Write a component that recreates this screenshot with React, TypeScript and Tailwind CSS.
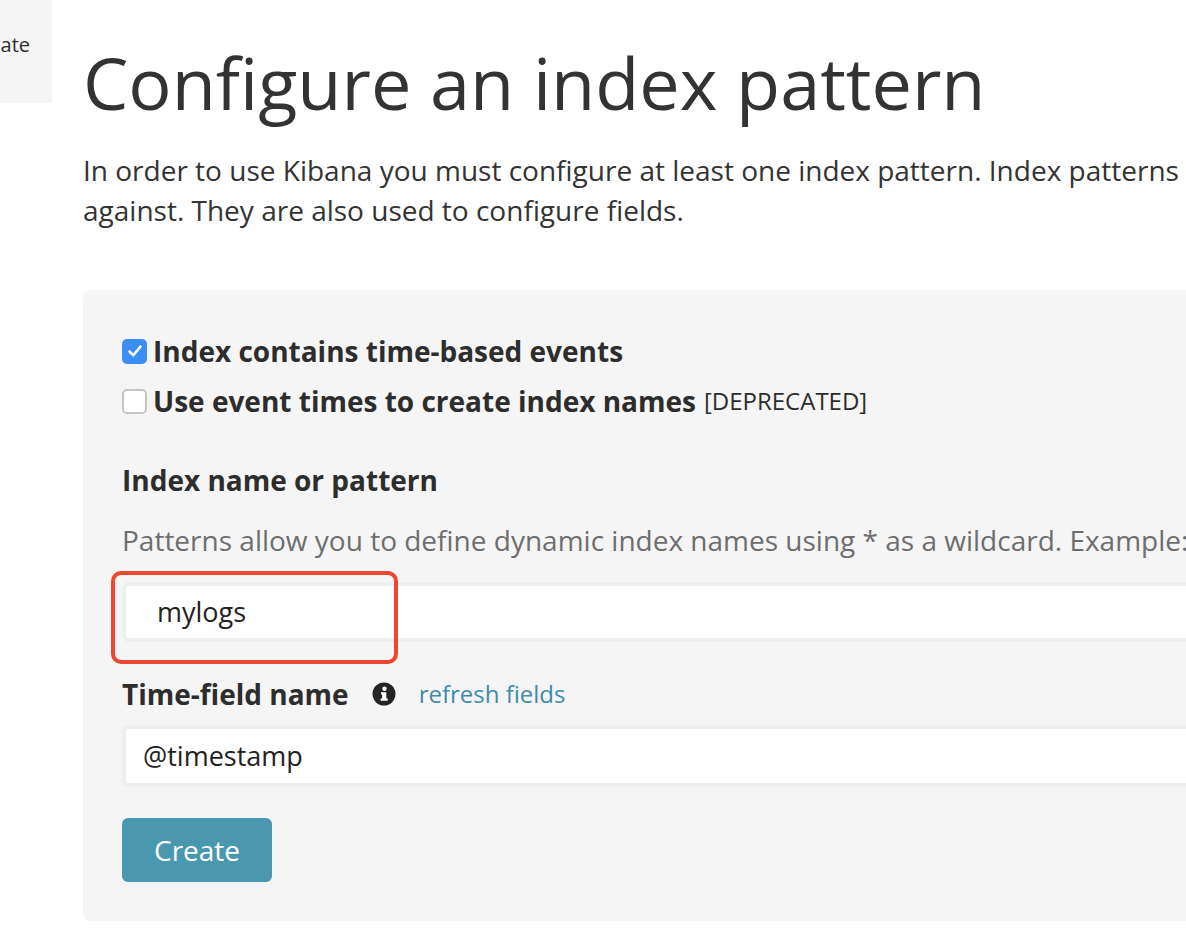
import React from "react";

function InfoIcon() {
    return (
        <svg width="24" height="24" viewBox="0 0 24 24" className="block">
            <circle cx="12" cy="12" r="11.5" fill="#252525" />
            <circle cx="12.5" cy="6.8" r="2.2" fill="#ffffff" />
            <path
                d="M9 10.2h5.3v6.4h1.4v2.2H8.6v-2.2h1.5v-4.2H9z"
                fill="#ffffff"
            />
        </svg>
    );
}

function CheckedBox() {
    return (
        <span className="flex h-[25px] w-[25px] items-center justify-center rounded-[5px] bg-[#3a8ef5]">
            <svg width="16" height="14" viewBox="0 0 16 14">
                <path
                    d="M2.5 7.5l3.8 3.8L13.5 2.5"
                    fill="none"
                    stroke="#ffffff"
                    strokeWidth="2.6"
                    strokeLinecap="round"
                    strokeLinejoin="round"
                />
            </svg>
        </span>
    );
}

function EmptyBox() {
    return (
        <span className="block h-[25px] w-[25px] rounded-[5px] border-2 border-[#c4c4c4] bg-white" />
    );
}

export default function App() {
    return (
        <div
            className="relative flex h-[930px] w-[1186px] overflow-hidden bg-white text-[#2d2d2d]"
            style={{ fontFamily: '"Open Sans", "Liberation Sans", sans-serif' }}
        >
            {/* left nav, mostly scrolled off */}
            <div className="w-[52px] shrink-0">
                <div className="flex h-[103px] items-center justify-end overflow-hidden bg-[#f5f5f5] pr-[22px] pb-[14px]">
                    <span className="whitespace-nowrap text-[20px]">Create</span>
                </div>
            </div>

            <div className="ml-[31px] w-[1700px] shrink-0">
                <h1 className="mt-[46px] whitespace-nowrap text-[72px] font-normal leading-[72px] text-[#333333]">
                    Configure an index pattern
                </h1>

                <p className="mt-[32px] text-[28px] leading-[40px] text-[#333333]">
                    <span className="whitespace-nowrap">
                        In order to use Kibana you must configure at least one
                        index pattern. Index patterns are used to identify the
                        Elasticsearch index to run search and analytics
                    </span>
                    <br />
                    against. They are also used to configure fields.
                </p>

                <div className="mt-[60px] rounded-[8px] bg-[#f5f5f5] pt-[36px] pr-[40px] pb-[39px] pl-[39px]">
                    <div className="flex h-[50px] items-center gap-[6px]">
                        <CheckedBox />
                        <span className="text-[28px] font-bold">
                            Index contains time-based events
                        </span>
                    </div>
                    <div className="flex h-[50px] items-center gap-[6px]">
                        <EmptyBox />
                        <span className="text-[28px] font-bold">
                            Use event times to create index names
                        </span>
                        <span className="ml-[2px] text-[24px]">[DEPRECATED]</span>
                    </div>

                    <div className="mt-[34px] flex h-[40px] items-center text-[28px] font-bold">
                        Index name or pattern
                    </div>
                    <div className="mt-[20px] flex h-[40px] items-center whitespace-nowrap text-[28px] text-[#6e6e6e]">
                        Patterns allow you to define dynamic index names using *
                        as a wildcard. Example: logstash-*
                    </div>

                    <div className="relative mt-[22px]">
                        <div className="flex h-[60px] items-center rounded-[6px] border-4 border-[#eceff1] bg-white pl-[31px] text-[27px] text-[#222222]">
                            mylogs
                        </div>
                        <div className="pointer-events-none absolute top-[-11px] left-[-11px] h-[93px] w-[287px] rounded-[10px] border-4 border-[#ed4631]" />
                    </div>

                    <div className="mt-[32px] flex h-[40px] items-center">
                        <span className="text-[28px] font-bold">
                            Time-field name
                        </span>
                        <span className="ml-[23px]">
                            <InfoIcon />
                        </span>
                        <a className="ml-[23px] text-[24px] text-[#3f8bab]">
                            refresh fields
                        </a>
                    </div>

                    <div className="mt-[11px] flex h-[62px] items-center rounded-[6px] border-4 border-[#eceff1] bg-white pl-[17px] text-[27px] text-[#222222]">
                        @timestamp
                    </div>

                    <button className="mt-[31px] flex h-[64px] items-center rounded-[6px] bg-[#4a98b0] px-[32px] text-[28px] text-white">
                        Create
                    </button>
                </div>
            </div>
        </div>
    );
}
